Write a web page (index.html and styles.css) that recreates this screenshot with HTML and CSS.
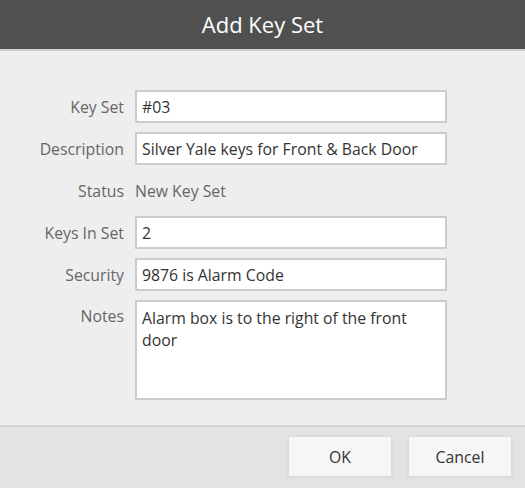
FILE: index.html
```html
<!DOCTYPE html>
<html lang="en">
<head>
  <meta charset="UTF-8">
  <title>Add Key Set</title>
  <link rel="stylesheet" href="styles.css">
</head>
<body>
  <div class="dialog">
    <div class="dialog-header">Add Key Set</div>
    <div class="dialog-body">
      <div class="form-row">
        <label class="form-label" for="keySet">Key Set</label>
        <input class="form-input" type="text" id="keySet" value="#03">
      </div>
      <div class="form-row">
        <label class="form-label" for="description">Description</label>
        <input class="form-input" type="text" id="description" value="Silver Yale keys for Front &amp; Back Door">
      </div>
      <div class="form-row">
        <span class="form-label">Status</span>
        <span class="form-value">New Key Set</span>
      </div>
      <div class="form-row">
        <label class="form-label" for="keysInSet">Keys In Set</label>
        <input class="form-input" type="text" id="keysInSet" value="2">
      </div>
      <div class="form-row">
        <label class="form-label" for="security">Security</label>
        <input class="form-input" type="text" id="security" value="9876 is Alarm Code">
      </div>
      <div class="form-row form-row-top">
        <label class="form-label" for="notes">Notes</label>
        <textarea class="form-input form-textarea" id="notes">Alarm box is to the right of the front door</textarea>
      </div>
    </div>
    <div class="dialog-footer">
      <button class="btn" type="button">OK</button>
      <button class="btn" type="button">Cancel</button>
    </div>
  </div>
</body>
</html>
```

FILE: styles.css
```css
body { margin: 0; font-family: "Open Sans", "Noto Sans", Arial, sans-serif; background: #eeeeee; }
.dialog { width: 525px; height: 488px; display: flex; flex-direction: column; background: #eeeeee; }
.dialog-header { height: 49px; line-height: 49px; background: #505050; color: #fff; font-size: 22px; text-align: center; border-bottom: 2px solid #d0d0d0; flex-shrink: 0; }
.dialog-body { flex: 1; padding: 39px 0 0 0; display: flex; flex-direction: column; gap: 9px; }
.form-row { display: flex; align-items: center; height: 33px; }
.form-row-top { align-items: flex-start; height: auto; }
.form-label { width: 124px; text-align: right; padding-right: 11px; color: #666; font-size: 15.8px; flex-shrink: 0; }
.form-row-top .form-label { padding-top: 5px; }
.form-value { color: #666; font-size: 15.8px; }
.form-input { width: 312px; height: 33px; box-sizing: border-box; border: 2px solid #cccccc; background: #fff; padding: 0 5px; font-family: inherit; font-size: 15.8px; color: #333; outline: none; }
.form-textarea { height: 100px; padding: 5px 5px; resize: none; line-height: 22px; }
.dialog-footer { height: 53px; flex-shrink: 0; border-top: 2px solid #d2d2d2; background: #e3e3e3; display: flex; justify-content: flex-end; align-items: flex-start; gap: 14px; padding: 8px 12px 0 0; }
.btn { width: 106px; height: 43px; border: 2px solid #dcdcdc; background: #f6f6f6; font-family: inherit; font-size: 15.8px; color: #333; }
```
